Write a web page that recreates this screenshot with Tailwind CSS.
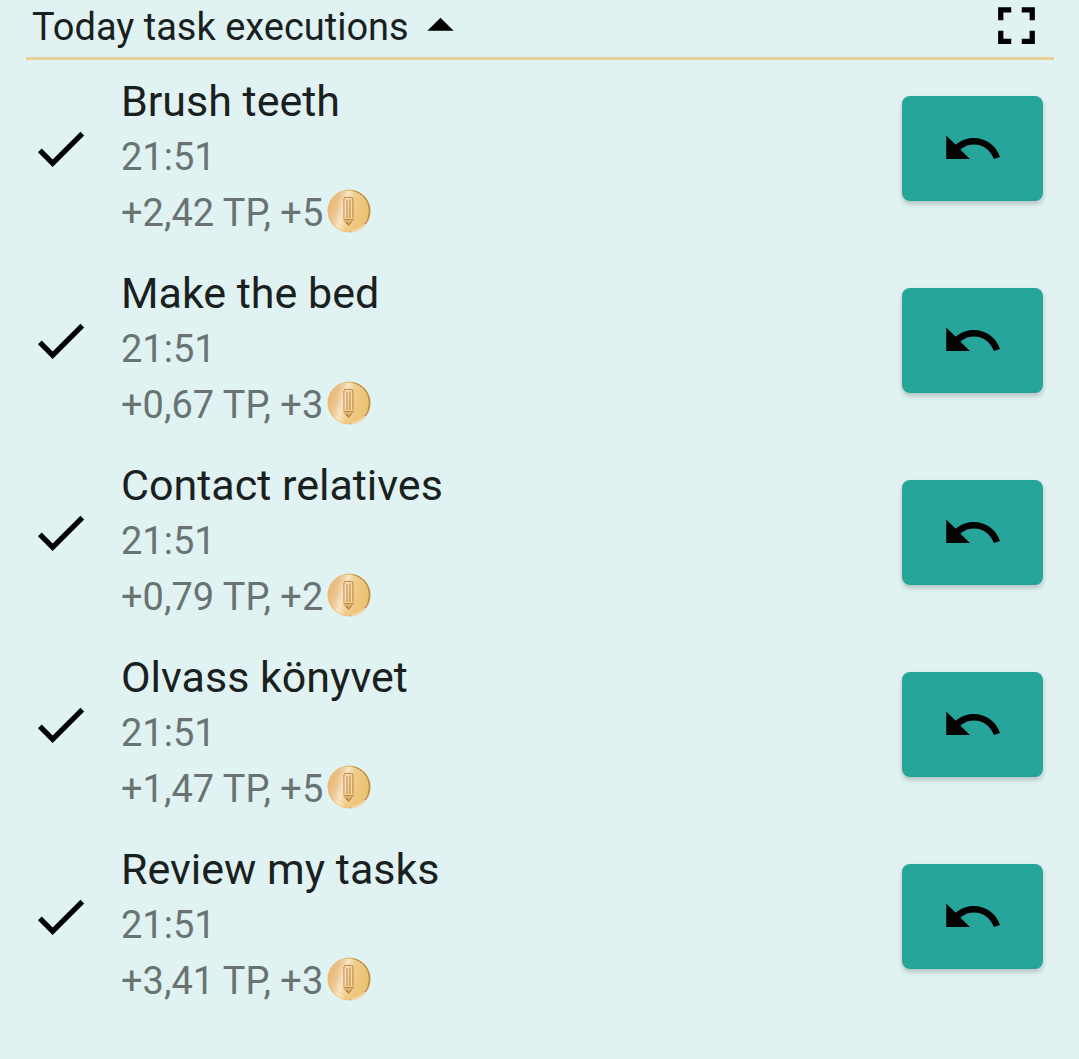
<!DOCTYPE html>
<html lang="en">
<head>
<meta charset="utf-8">
<meta name="viewport" content="width=device-width, initial-scale=1">
<title>Today task executions</title>
<script src="https://cdn.jsdelivr.net/npm/@tailwindcss/browser@4"></script>
</head>
<body class="min-h-screen overflow-x-hidden bg-[#e0f2f1] font-[Roboto,sans-serif] text-[#1a1f1f]">
<svg class="absolute size-0" aria-hidden="true">
  <defs>
    <linearGradient id="gold" x1="0" y1="0.35" x2="1" y2="0.65">
      <stop offset="0" stop-color="#e6b873"/>
      <stop offset="0.2" stop-color="#ebc28a"/>
      <stop offset="0.38" stop-color="#f8e3c6"/>
      <stop offset="0.55" stop-color="#f0cd8c"/>
      <stop offset="1" stop-color="#ebc06c"/>
    </linearGradient>
    <linearGradient id="rim" x1="0" y1="0" x2="1" y2="0">
      <stop offset="0" stop-color="#f3cf91"/>
      <stop offset="0.5" stop-color="#e3b466"/>
      <stop offset="1" stop-color="#bd8c45"/>
    </linearGradient>
  </defs>
  <symbol id="check" viewBox="0 0 24 24"><path d="M9 16.17L4.83 12l-1.42 1.41L9 19 21 7l-1.41-1.41z"/></symbol>
  <symbol id="undo" viewBox="0 0 24 24"><path d="M12.5 8c-2.65 0-5.05.99-6.9 2.6L2 7v9h9l-3.62-3.62c1.39-1.16 3.16-1.88 5.12-1.88 3.54 0 6.55 2.31 7.6 5.5l2.37-.78C21.08 11.03 17.15 8 12.5 8z"/></symbol>
  <symbol id="coin" viewBox="0 0 44 44">
    <circle cx="22" cy="22" r="21.5" fill="url(#rim)"/>
    <circle cx="21.3" cy="22" r="20.6" fill="url(#gold)"/>
    <path d="M26 1.5A21 21 0 0 1 37 36" fill="none" stroke="#c2924c" stroke-width="1"/>
    <path d="M25 42.3A21 21 0 0 0 38 35" fill="none" stroke="#fae3ad" stroke-width="1.2"/>
    <path d="M17 29.5V10.5Q17 8.500 19 8.500H24Q26 8.500 26 10.500V29.500M20 10.500V29M23 10.500V29" fill="none" stroke="#c08a4a" stroke-width="1.1"/>
    <path d="M18.2 29V10.500M24.500 29V10.500" fill="none" stroke="#f9e2b8" stroke-width="0.8"/>
    <path d="M16.500 30.800H26.500" stroke="#b67e3e" stroke-width="1.200"/>
    <path d="M17.500 32.500H25.500L21.500 37z" fill="#b9823f"/>
    <path d="M19 32.500H24L21.500 34.500z" fill="#e8be7c"/>
  </symbol>
</svg>

<main class="pb-12">
  <header class="-mt-[7px] ml-[26px] mr-[25px] flex items-center justify-between border-b-3 border-[#e9d09b] px-[6px]">
    <button type="button" aria-expanded="true" class="flex items-center">
      <h1 class="pt-1 text-[38px] leading-[60px]">Today task executions</h1>
      <svg class="size-[63px] fill-black" viewBox="0 0 24 24" aria-hidden="true"><path d="M7 14l5-5 5 5z"/></svg>
    </button>
    <button type="button" aria-label="Full screen">
      <svg class="size-[63px] fill-black" viewBox="0 0 24 24" aria-hidden="true"><path d="M7 14H5v5h5v-2H7v-3zm-2-4h2V7h3V5H5v5zm12 7h-3v2h5v-5h-2v3zM14 5v2h3v3h2V5h-5z"/></svg>
    </button>
  </header>

  <ul class="flex flex-col gap-6 pl-[29px] pr-9 pt-[13px]">
    <li class="flex items-start">
      <svg class="mt-11 size-[63px] shrink-0" role="img" aria-label="Done"><use href="#check"/></svg>
      <div class="ml-[29px] grow text-[38px] leading-[56px] text-[#697373]">
        <h2 class="text-[43px] leading-[56px] text-[#1a1f1f]">Brush teeth</h2>
        <p>21:51</p>
        <p class="flex items-center">+2,42 TP, +5<svg class="mb-1 ml-1 size-11" role="img" aria-label="coins"><use href="#coin"/></svg></p>
      </div>
      <button type="button" aria-label="Undo Brush teeth" class="mt-[23px] flex h-[105px] w-[141px] shrink-0 items-center justify-center rounded-lg bg-[#26a69a] shadow-[0_3px_5px_rgba(0,0,0,0.2)]"><svg class="size-[63px]" aria-hidden="true"><use href="#undo"/></svg></button>
    </li>
    <li class="flex items-start">
      <svg class="mt-11 size-[63px] shrink-0" role="img" aria-label="Done"><use href="#check"/></svg>
      <div class="ml-[29px] grow text-[38px] leading-[56px] text-[#697373]">
        <h2 class="text-[43px] leading-[56px] text-[#1a1f1f]">Make the bed</h2>
        <p>21:51</p>
        <p class="flex items-center">+0,67 TP, +3<svg class="mb-1 ml-1 size-11" role="img" aria-label="coins"><use href="#coin"/></svg></p>
      </div>
      <button type="button" aria-label="Undo Make the bed" class="mt-[23px] flex h-[105px] w-[141px] shrink-0 items-center justify-center rounded-lg bg-[#26a69a] shadow-[0_3px_5px_rgba(0,0,0,0.2)]"><svg class="size-[63px]" aria-hidden="true"><use href="#undo"/></svg></button>
    </li>
    <li class="flex items-start">
      <svg class="mt-11 size-[63px] shrink-0" role="img" aria-label="Done"><use href="#check"/></svg>
      <div class="ml-[29px] grow text-[38px] leading-[56px] text-[#697373]">
        <h2 class="text-[43px] leading-[56px] text-[#1a1f1f]">Contact relatives</h2>
        <p>21:51</p>
        <p class="flex items-center">+0,79 TP, +2<svg class="mb-1 ml-1 size-11" role="img" aria-label="coins"><use href="#coin"/></svg></p>
      </div>
      <button type="button" aria-label="Undo Contact relatives" class="mt-[23px] flex h-[105px] w-[141px] shrink-0 items-center justify-center rounded-lg bg-[#26a69a] shadow-[0_3px_5px_rgba(0,0,0,0.2)]"><svg class="size-[63px]" aria-hidden="true"><use href="#undo"/></svg></button>
    </li>
    <li class="flex items-start">
      <svg class="mt-11 size-[63px] shrink-0" role="img" aria-label="Done"><use href="#check"/></svg>
      <div class="ml-[29px] grow text-[38px] leading-[56px] text-[#697373]">
        <h2 lang="hu" class="text-[43px] leading-[56px] text-[#1a1f1f]">Olvass könyvet</h2>
        <p>21:51</p>
        <p class="flex items-center">+1,47 TP, +5<svg class="mb-1 ml-1 size-11" role="img" aria-label="coins"><use href="#coin"/></svg></p>
      </div>
      <button type="button" aria-label="Undo Olvass könyvet" class="mt-[23px] flex h-[105px] w-[141px] shrink-0 items-center justify-center rounded-lg bg-[#26a69a] shadow-[0_3px_5px_rgba(0,0,0,0.2)]"><svg class="size-[63px]" aria-hidden="true"><use href="#undo"/></svg></button>
    </li>
    <li class="flex items-start">
      <svg class="mt-11 size-[63px] shrink-0" role="img" aria-label="Done"><use href="#check"/></svg>
      <div class="ml-[29px] grow text-[38px] leading-[56px] text-[#697373]">
        <h2 class="text-[43px] leading-[56px] text-[#1a1f1f]">Review my tasks</h2>
        <p>21:51</p>
        <p class="flex items-center">+3,41 TP, +3<svg class="mb-1 ml-1 size-11" role="img" aria-label="coins"><use href="#coin"/></svg></p>
      </div>
      <button type="button" aria-label="Undo Review my tasks" class="mt-[23px] flex h-[105px] w-[141px] shrink-0 items-center justify-center rounded-lg bg-[#26a69a] shadow-[0_3px_5px_rgba(0,0,0,0.2)]"><svg class="size-[63px]" aria-hidden="true"><use href="#undo"/></svg></button>
    </li>
  </ul>
</main>
</body>
</html>
